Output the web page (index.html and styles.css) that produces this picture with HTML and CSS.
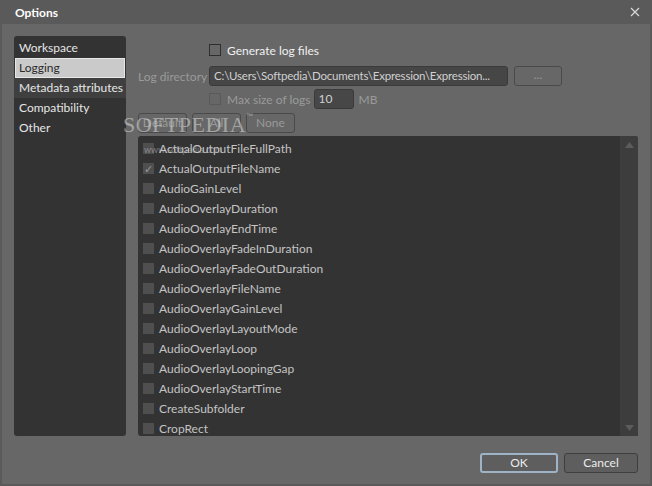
FILE: index.html
```html
<!DOCTYPE html>
<html lang="en">
<head>
    <meta charset="UTF-8">
    <title>Options</title>
    <link rel="stylesheet" href="styles.css">
</head>
<body>
    <div class="window">
        <div class="titlebar">
            <span class="title">Options</span>
            <span class="close">
                <svg width="10" height="10" viewBox="0 0 10 10"><path d="M1 1L9 9M9 1L1 9" stroke="#d8d8d8" stroke-width="1.2"/></svg>
            </span>
        </div>

        <div class="content">
            <div class="nav">
                <div class="nav-item">Workspace</div>
                <div class="nav-item selected">Logging</div>
                <div class="nav-item hover">Metadata attributes</div>
                <div class="nav-item">Compatibility</div>
                <div class="nav-item">Other</div>
            </div>

            <div class="main">
                <div class="row gen-row">
                    <span class="check"></span>
                    <span class="label">Generate log files</span>
                </div>
                <div class="row dir-row">
                    <span class="dim label-col">Log directory</span>
                    <span class="textbox">C:\Users\Softpedia\Documents\Expression\Expression...</span>
                    <span class="btn browse">...</span>
                </div>
                <div class="row max-row">
                    <span class="check dim-check"></span>
                    <span class="dim">Max size of logs</span>
                    <span class="numbox">10</span>
                    <span class="dim">MB</span>
                </div>
                <div class="row sel-row">
                    <span class="btn small">Default</span>
                    <span class="btn small">All</span>
                    <span class="btn small">None</span>
                </div>

                <div class="list">
                    <div class="items">
                        <div class="item"><span class="check box"></span>ActualOutputFileFullPath</div>
                        <div class="item"><span class="check box checked">&#10003;</span>ActualOutputFileName</div>
                        <div class="item"><span class="check box"></span>AudioGainLevel</div>
                        <div class="item"><span class="check box"></span>AudioOverlayDuration</div>
                        <div class="item"><span class="check box"></span>AudioOverlayEndTime</div>
                        <div class="item"><span class="check box"></span>AudioOverlayFadeInDuration</div>
                        <div class="item"><span class="check box"></span>AudioOverlayFadeOutDuration</div>
                        <div class="item"><span class="check box"></span>AudioOverlayFileName</div>
                        <div class="item"><span class="check box"></span>AudioOverlayGainLevel</div>
                        <div class="item"><span class="check box"></span>AudioOverlayLayoutMode</div>
                        <div class="item"><span class="check box"></span>AudioOverlayLoop</div>
                        <div class="item"><span class="check box"></span>AudioOverlayLoopingGap</div>
                        <div class="item"><span class="check box"></span>AudioOverlayStartTime</div>
                        <div class="item"><span class="check box"></span>CreateSubfolder</div>
                        <div class="item"><span class="check box"></span>CropRect</div>
                    </div>
                    <div class="scrollbar">
                        <svg width="9" height="6" viewBox="0 0 9 6"><path d="M4.5 0L9 6H0Z" fill="#5c5c5c"/></svg>
                        <svg width="9" height="6" viewBox="0 0 9 6"><path d="M0 0H9L4.5 6Z" fill="#5c5c5c"/></svg>
                    </div>
                </div>
            </div>
        </div>

        <div class="footer">
            <span class="btn ok">OK</span>
            <span class="btn cancel">Cancel</span>
        </div>

        <div class="watermark">SOFTPEDIA<sup>™</sup></div>
        <div class="watermark-url">www.softpedia.com</div>
    </div>
</body>
</html>
```

FILE: styles.css
```css
body {
    margin: 0;
    background: #666666;
    font-family: Lato, "Liberation Sans", sans-serif;
    font-size: 12px;
    color: #e8e8e8;
}

.window {
    position: relative;
    width: 652px;
    height: 486px;
    box-sizing: border-box;
    border: 2px solid #5a5a5a;
    border-top: none;
    background: #676767;
    overflow: hidden;
}

.titlebar {
    height: 24px;
    margin: 0 -2px;
    background: #5a5a5a;
    display: flex;
    align-items: center;
    justify-content: space-between;
    padding: 0 12px 0 15px;
}

.title {
    font-weight: bold;
    color: #ffffff;
}

.close {
    display: flex;
    width: 10px;
    height: 10px;
}

.content {
    display: flex;
    padding: 12px 0 0 12px;
    height: 400px;
}

.nav {
    width: 112px;
    height: 400px;
    background: #333333;
    border-radius: 3px;
    padding-top: 2px;
    box-sizing: border-box;
}

.nav-item {
    height: 20px;
    line-height: 20px;
    padding-left: 5px;
    color: #e6e6e6;
    white-space: nowrap;
}

.nav-item.selected {
    background: #cacaca;
    color: #2a2a2a;
    border: 1px solid #e8e8e8;
    margin: 0 1px;
    padding-left: 3px;
    line-height: 18px;
    box-sizing: border-box;
}

.nav-item.hover {
    background: #3f3f3f;
}

.main {
    margin-left: 12px;
    width: 500px;
    display: flex;
    flex-direction: column;
}

.row {
    display: flex;
    align-items: center;
    white-space: nowrap;
}

.gen-row {
    height: 20px;
    margin-top: 4px;
    padding-left: 71px;
}

.dir-row {
    height: 20px;
    margin-top: 6px;
}

.max-row {
    height: 20px;
    margin-top: 3px;
    padding-left: 71px;
}

.sel-row {
    height: 20px;
    margin-top: 4px;
    gap: 5px;
}

.check {
    width: 10px;
    height: 10px;
    border: 1px solid #2e2e2e;
    background: #676767;
    margin-right: 6px;
    flex: none;
}

.dim-check {
    border-color: #5a5a5a;
}

.label {
    color: #f0f0f0;
}

.dim {
    color: #9a9a9a;
}

.label-col {
    width: 71px;
    flex: none;
}

.textbox {
    width: 299px;
    height: 20px;
    flex: none;
    box-sizing: border-box;
    background: #464646;
    border: 1px solid #3a3a3a;
    border-radius: 3px;
    padding: 0 4px;
    font-size: 11.5px;
    letter-spacing: -0.2px;
    line-height: 18px;
    color: #d0d0d0;
    overflow: hidden;
}

.btn {
    box-sizing: border-box;
    border: 1px solid #4a4a4a;
    border-radius: 3px;
    text-align: center;
    color: #9a9a9a;
    background: #676767;
}

.browse {
    width: 48px;
    height: 20px;
    margin-left: 6px;
    line-height: 16px;
}

.numbox {
    width: 40px;
    height: 20px;
    box-sizing: border-box;
    background: #474747;
    border: 1px solid #3a3a3a;
    border-radius: 3px;
    margin: 0 5px 0 3px;
    padding-left: 4px;
    line-height: 18px;
    color: #d0d0d0;
}

.small {
    width: 49px;
    height: 20px;
    line-height: 18px;
}

.list {
    margin-top: 3px;
    height: 300px;
    background: #333333;
    border-radius: 3px 3px 0 3px;
    display: flex;
    overflow: hidden;
}

.items {
    flex: 1;
    padding-top: 2px;
}

.item {
    height: 20px;
    display: flex;
    align-items: center;
    padding-left: 5px;
    color: #c4c4c4;
}

.box {
    width: 11px;
    height: 11px;
    border: none;
    background: #4f4f4f;
    margin-right: 5px;
    font-size: 11px;
    line-height: 11px;
    color: #9a9a9a;
    text-align: center;
}

.scrollbar {
    width: 18px;
    background: #3d3d3d;
    display: flex;
    flex-direction: column;
    justify-content: space-between;
    align-items: center;
    padding: 6px 0 5px;
    box-sizing: border-box;
}

.footer {
    display: flex;
    justify-content: flex-end;
    gap: 6px;
    padding: 17px 12px 0 0;
}

.ok {
    width: 78px;
    height: 20px;
    line-height: 16px;
    border: 2px solid #9fb3c6;
    background: #5e5e5e;
    color: #ececec;
}

.cancel {
    width: 74px;
    height: 20px;
    line-height: 18px;
    border-color: #3e3e3e;
    background: #5e5e5e;
    color: #ececec;
}

.watermark {
    position: absolute;
    left: 121px;
    top: 112px;
    font-family: "Liberation Serif", serif;
    font-size: 22px;
    letter-spacing: 0.5px;
    color: rgba(220, 220, 220, 0.55);
}

.watermark sup {
    font-family: "Liberation Sans", sans-serif;
    font-size: 7px;
    vertical-align: top;
}

.watermark-url {
    position: absolute;
    left: 142px;
    top: 144px;
    font-size: 9px;
    color: rgba(200, 200, 200, 0.5);
}
```
